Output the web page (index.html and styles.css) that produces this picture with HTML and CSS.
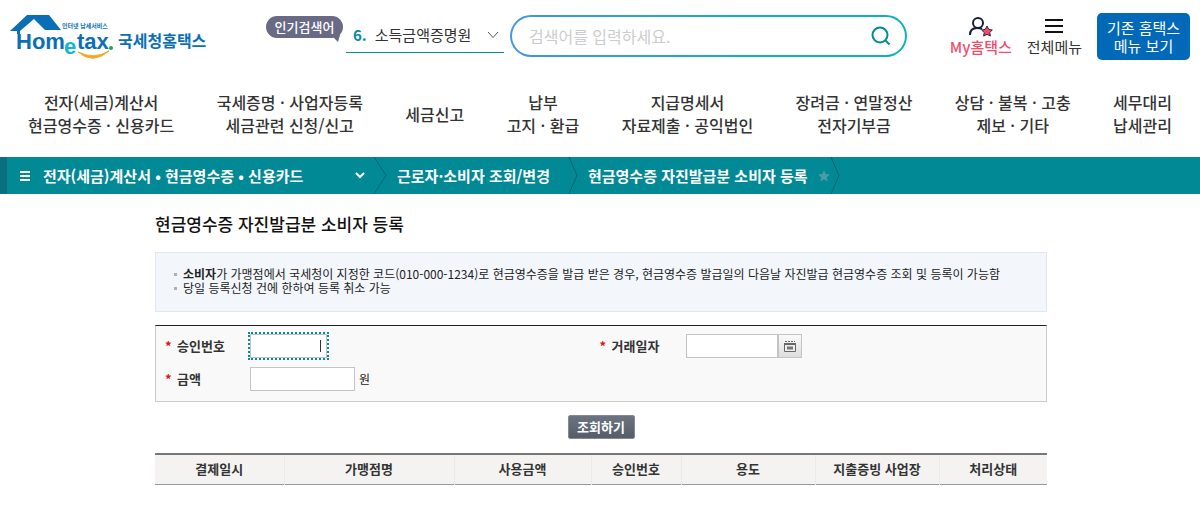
FILE: index.html
```html
<!DOCTYPE html>
<html lang="ko">
<head>
<meta charset="utf-8">
<title>국세청 홈택스</title>
<link rel="stylesheet" href="styles.css">
</head>
<body>
<header class="header">
  <a class="logo" href="#" aria-label="국세청홈택스">
    <svg width="200" height="50" viewBox="0 0 200 50">
      <path d="M1 18 L18 2 H40 L52 17 H36 L25 6 L11 18 V21 H8 V18 Z" fill="#0b6fb8"/>
      <text class="logo-small" x="53" y="15">인터넷 납세서비스</text>
      <text class="logo-word" x="7" y="36">Hom</text>
      <text class="logo-e" x="55" y="41">e</text>
      <text class="logo-word" x="68" y="36">tax</text>
      <circle cx="102" cy="35" r="2" fill="#1fa64a"/>
      <path d="M69 39 Q84 52 100 38 Q85 47 69 39 Z" fill="#f5a623" stroke="#f5a623"/>
      <text class="logo-name" x="109" y="34">국세청홈택스</text>
    </svg>
  </a>
  <span class="tag">인기검색어
    <svg class="tag-tail" width="9" height="8" viewBox="0 0 9 8"><path d="M0 0 H9 L7 7 Z" fill="#686a86"/></svg>
  </span>
  <button class="keyword" type="button">
    <b class="rank">6.</b><span>소득금액증명원</span>
    <svg class="keyword-arrow" width="12" height="8" viewBox="0 0 12 8"><path d="M1 1 L6 6.500 L11 1" fill="none" stroke="#555"/></svg>
  </button>
  <form class="search">
    <input class="search-input" type="text" placeholder="검색어를 입력하세요." aria-label="검색어">
    <button class="search-button" type="button" aria-label="검색">
      <svg width="20" height="20" viewBox="0 0 20 20" fill="none" stroke="#07899a" stroke-width="2"><circle cx="9" cy="9" r="7.500"/><path d="M14.500 14.500 L18.500 18.500"/></svg>
    </button>
  </form>
  <a class="tool tool-my" href="#">
    <svg width="24" height="20" viewBox="0 0 24 20"><g fill="none" stroke="#1b1c3a" stroke-width="2"><circle cx="9" cy="6" r="5"/><path d="M1 18 C1 13 4 11 8 11 Q11 11 13 12"/></g><path d="M18 9 L19.700 12.400 L23.300 13 L20.700 15.600 L21.400 19 L18 17.400 L14.600 19 L15.300 15.600 L12.700 13 L16.300 12.400 Z" fill="#f04e6e" stroke="#3a2038"/></svg>
    My홈택스
  </a>
  <a class="tool" href="#">
    <svg width="20" height="20" viewBox="0 0 20 20"><path d="M1 3 H19 M1 9 H19 M1 15 H19" stroke="#111" stroke-width="2"/></svg>
    전체메뉴
  </a>
  <button class="old-menu" type="button">기존 홈택스<br>메뉴 보기</button>
</header>

<nav class="main-nav">
  <a href="#">전자(세금)계산서<br>현금영수증 · 신용카드</a>
  <a href="#">국세증명 · 사업자등록<br>세금관련 신청/신고</a>
  <a href="#">세금신고</a>
  <a href="#">납부<br>고지 · 환급</a>
  <a href="#">지급명세서<br>자료제출 · 공익법인</a>
  <a href="#">장려금 · 연말정산<br>전자기부금</a>
  <a href="#">상담 · 불복 · 고충<br>제보 · 기타</a>
  <a href="#">세무대리<br>납세관리</a>
</nav>

<nav class="crumbs" aria-label="현재 위치">
  <button class="crumb-menu" type="button">
    <svg width="10" height="10" viewBox="0 0 10 10"><path d="M0 1 H10 M0 5 H10 M0 9 H10" stroke="#fff" stroke-width="2"/></svg>
    <span class="crumb-title">전자(세금)계산서 • 현금영수증 • 신용카드</span>
    <svg width="10" height="8" viewBox="0 0 10 8"><path d="M1 1 L5 5 L9 1" fill="none" stroke="#fff" stroke-width="2"/></svg>
  </button>
  <svg class="crumb-sep crumb-sep-first" viewBox="0 0 14 37" preserveAspectRatio="none"><path d="M1 0 L13 18.500 L1 37" fill="none" stroke="#07616f"/></svg>
  <a class="crumb crumb-mid" href="#">근로자·소비자 조회/변경</a>
  <svg class="crumb-sep" viewBox="0 0 10 37" preserveAspectRatio="none"><path d="M1 0 L9 18.500 L1 37" fill="none" stroke="#07616f"/></svg>
  <a class="crumb crumb-last" href="#">현금영수증 자진발급분 소비자 등록</a>
  <button class="favorite" type="button" aria-label="즐겨찾기">
    <svg width="12" height="12" viewBox="0 0 12 12"><path d="M6 0 L7.600 4 L12 4.400 L8.700 7.200 L9.700 11.500 L6 9.200 L2.300 11.500 L3.300 7.200 L0 4.400 L4.400 4 Z" fill="#4d9ba5"/></svg>
  </button>
  <svg class="crumb-sep" viewBox="0 0 10 37" preserveAspectRatio="none"><path d="M1 0 L9 18.500 L1 37" fill="none" stroke="#07616f"/></svg>
</nav>

<main class="content">
  <h1 class="title">현금영수증 자진발급분 소비자 등록</h1>
  <ul class="notice">
    <li><b>소비자</b>가 가맹점에서 국세청이 지정한 코드(010-000-1234)로 현금영수증을 발급 받은 경우, 현금영수증 발급일의 다음날 자진발급 현금영수증 조회 및 등록이 가능함</li>
    <li>당일 등록신청 건에 한하여 등록 취소 가능</li>
  </ul>
  <form>
    <div class="fields">
      <label class="label" for="approval">승인번호</label>
      <div class="field"><span class="active"><input class="box box-small" id="approval" type="text"><span class="caret"></span></span></div>
      <label class="label" for="date">거래일자</label>
      <div class="field">
        <input class="box box-date" id="date" type="text"><button class="calendar" type="button" aria-label="달력">
          <svg width="12" height="11" viewBox="0 0 12 11"><path d="M1 .500 H11" stroke="#666" stroke-dasharray="2 1"/><path d="M.500 2.500 H11.500 V10.500 H.500 Z" fill="#eee" stroke="#666"/><path d="M0 3 H12" stroke="#666" stroke-width="2"/><path d="M3 7 H9" stroke="#777" stroke-width="3"/></svg>
        </button>
      </div>
      <label class="label" for="amount">금액</label>
      <div class="field"><input class="box box-amount" id="amount" type="text"><span class="unit">원</span></div>
    </div>
    <div class="actions"><button class="submit" type="button">조회하기</button></div>
  </form>
  <table class="results">
    <colgroup><col class="c-date"><col class="c-store"><col class="c-amount"><col class="c-number"><col class="c-use"><col class="c-place"><col class="c-state"></colgroup>
    <thead><tr><th>결제일시</th><th>가맹점명</th><th>사용금액</th><th>승인번호</th><th>용도</th><th>지출증빙 사업장</th><th>처리상태</th></tr></thead>
  </table>
</main>
</body>
</html>
```

FILE: styles.css
```css
* { box-sizing: border-box; }
body { margin: 0; background: #fff; color: #222; font: 15px/20px "Noto Sans CJK KR", sans-serif; }
button, input { font: inherit; color: inherit; margin: 0; padding: 0; border: 0; background: none; }
button { cursor: pointer; }
input:focus { outline: 0; }
a { color: inherit; text-decoration: none; }
svg { display: block; flex: none; }

.header { display: flex; align-items: flex-start; padding: 13px 10px 0 9px; white-space: nowrap; }
.logo { flex: none; margin-right: 57px; }
.logo-word { font: bold 22px "Liberation Sans", sans-serif; fill: #0b6fb8; }
.logo-e { font: bold 22px "Liberation Sans", sans-serif; fill: #12b5d6; }
.logo-small { font: bold 6px "Noto Sans CJK KR", sans-serif; fill: #0b6fb8; }
.logo-name { font: bold 16px "Noto Sans CJK KR", sans-serif; fill: #0b6fb8; }
.tag { position: relative; flex: none; width: 77px; margin: 3px 3px 0 0; border-radius: 11px; background: #686a86; color: #fff; font-size: 13px; font-weight: 500; line-height: 22px; text-align: center; }
.tag-tail { position: absolute; right: 3px; top: 19px; }
.keyword { display: flex; align-items: center; width: 158px; height: 40px; padding: 4px 5px 0 7px; border-bottom: 1px solid #07899a; color: #333; }
.rank { margin-right: 8px; color: #07899a; }
.keyword-arrow { margin-left: auto; }
.search { display: flex; flex: 1; align-items: center; height: 42px; margin: 2px 43px 0 6px; padding: 0 14px 0 17px; border: 2px solid transparent; border-radius: 21px; background: linear-gradient(#fff, #fff) padding-box, linear-gradient(90deg, #4595e8, #12afc4 60%) border-box; }
.search-input { flex: 1; min-width: 0; font-size: 16px; }
.search-input::placeholder { color: #ccc; }
.tool { display: flex; flex-direction: column; align-items: center; margin: 4px 15px 0 0; color: #333; }
.tool-my { color: #f04e6e; font-weight: 500; }
.old-menu { flex: none; width: 93px; height: 47px; border-radius: 5px; background: #0169b7; color: #fff; line-height: 18px; }

.main-nav { display: flex; justify-content: space-between; align-items: center; padding: 28px 28px 20px; color: #333; font-size: 16px; font-weight: 500; line-height: 23px; text-align: center; white-space: nowrap; }

.crumbs { display: flex; align-items: center; height: 37px; border-left: 7px solid #0a7080; background: #028996; color: #fff; font-weight: 700; white-space: nowrap; }
.crumb-menu { display: flex; align-items: center; width: 366px; padding: 0 8px 0 13px; }
.crumb-title { margin: 0 auto 0 13px; }
.crumb-sep { width: 10px; height: 37px; }
.crumb-sep-first { width: 14px; }
.crumb-mid { margin: 0 18px 0 10px; }
.crumb-last { margin: 0 10px; }

.content { padding: 18px 153px 0 155px; }
.title { margin: 0 0 16px; color: #111; font-size: 17px; font-weight: 500; line-height: 24px; }
.notice { margin: 0 0 13px; padding: 14px 18px 16px; border: 1px solid #e0e8ef; background: #f3f7fc; color: #222; font-size: 12px; line-height: 14px; list-style: none; }
.notice li { display: flex; align-items: center; white-space: pre; }
.notice li::before { content: ""; width: 3px; height: 3px; margin-right: 6px; background: #aab0b5; }
.fields { display: grid; grid-template-columns: 85px 350fr 86px 361fr; row-gap: 9px; padding: 8px 0 10px 9px; border: 1px solid #ccc; border-top-color: #222; background: #f9f9f9; }
.label { display: flex; align-items: center; color: #333; font-size: 13px; font-weight: 700; }
.label::before { content: "*"; width: 12px; color: #d9141e; }
.field { display: flex; align-items: center; font-size: 12px; }
.box { height: 24px; border: 1px solid #c4c4c4; background: #fff; }
.active { position: relative; display: flex; outline: 2px dotted #07899a; }
.caret { position: absolute; right: 6px; top: 6px; width: 1px; height: 12px; background: #333; }
.box-small { width: 77px; }
.box-date { width: 92px; }
.box-amount { width: 105px; }
.unit { margin-left: 4px; }
.calendar { display: grid; place-items: center; width: 24px; height: 24px; border: 1px solid #c4c4c4; background: linear-gradient(#fafafa, #ddd); }
.actions { display: flex; justify-content: center; padding: 13px 0 14px; }
.submit { width: 67px; height: 24px; border: 1px solid #858b93; border-radius: 2px; background: linear-gradient(#6b7480, #565d69); color: #fff; font-size: 13px; font-weight: 700; line-height: 20px; }
.results { width: 100%; border-collapse: collapse; table-layout: fixed; border-top: 2px solid #777; border-bottom: 1px solid #999; background: #f4f3f2; }
.results th { height: 30px; padding: 0; border-left: 1px solid #e8eaeb; font-size: 13px; font-weight: 700; color: #333; }
.results th:first-child { border-left: 0; }
.c-date { width: 129px; }
.c-store { width: 170px; }
.c-amount { width: 137px; }
.c-number { width: 90px; }
.c-use { width: 134px; }
.c-place { width: 124px; }
.c-state { width: 108px; }
```
